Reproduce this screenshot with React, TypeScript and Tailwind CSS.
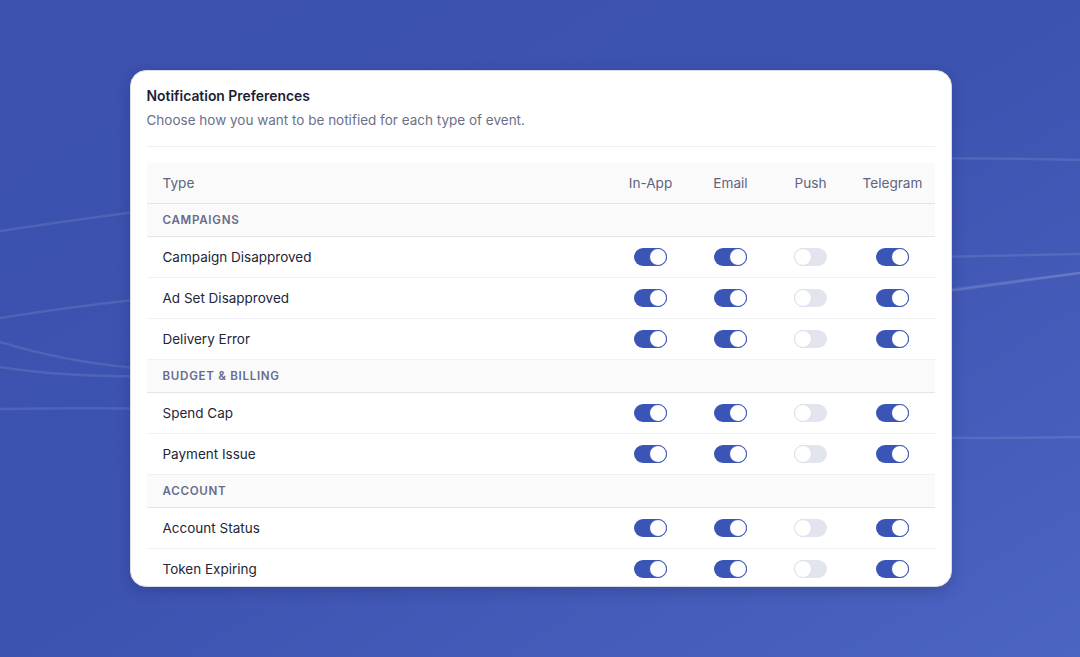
import React from "react";

type Row = { label: string; values: [boolean, boolean, boolean, boolean] };
type Group = { title: string; rows: Row[] };

const groups: Group[] = [
  {
    title: "Campaigns",
    rows: [
      { label: "Campaign Disapproved", values: [true, true, false, true] },
      { label: "Ad Set Disapproved", values: [true, true, false, true] },
      { label: "Delivery Error", values: [true, true, false, true] },
    ],
  },
  {
    title: "Budget & Billing",
    rows: [
      { label: "Spend Cap", values: [true, true, false, true] },
      { label: "Payment Issue", values: [true, true, false, true] },
    ],
  },
  {
    title: "Account",
    rows: [
      { label: "Account Status", values: [true, true, false, true] },
      { label: "Token Expiring", values: [true, true, false, true] },
    ],
  },
];

const channels = ["In-App", "Email", "Push", "Telegram"];

function Toggle({ on }: { on: boolean }) {
  return on ? (
    <div className="flex h-[18px] w-[33px] items-center justify-end rounded-full bg-[#3a55b5]">
      <div className="h-[18px] w-[18px] rounded-full border border-[#3a55b5] bg-white" />
    </div>
  ) : (
    <div className="flex h-[18px] w-[33px] items-center justify-start rounded-full bg-[#e3e5ee]">
      <div className="h-[18px] w-[18px] rounded-full border border-[#dcdfe9] bg-white" />
    </div>
  );
}

function Cells({ children, className }: { children: React.ReactNode; className?: string }) {
  return <div className={"grid grid-cols-[1fr_80px_80px_80px_84px] items-center " + (className ?? "")}>{children}</div>;
}

function Backdrop() {
  return (
    <svg className="absolute inset-0 h-full w-full" viewBox="0 0 1080 657" preserveAspectRatio="none">
      <g fill="none" stroke="#ffffff" strokeOpacity="0.1" strokeWidth="2.5">
        <path d="M0 231 C 300 185, 700 150, 1080 160" />
        <path d="M0 318 C 300 270, 700 262, 1080 254" />
        <path d="M0 342 C 250 420, 600 330, 1080 273" />
        <path d="M0 367 C 200 400, 600 340, 1080 273" />
        <path d="M0 409 C 400 402, 700 445, 1080 437" />
      </g>
    </svg>
  );
}

export default function App() {
  return (
    <div
      className="relative flex h-[657px] w-full items-center justify-center overflow-hidden bg-gradient-to-br from-[#3b51ad] via-[#3d53b0] to-[#4c64c2]"
      style={{ fontFamily: "Inter, 'Noto Sans', sans-serif" }}
    >
      <Backdrop />
      <div className="relative ml-px h-[517px] w-[822px] overflow-hidden rounded-2xl border border-[#d9dbe3] bg-white px-4 pt-[15px] shadow-[0_4px_14px_rgba(20,30,80,0.25)]">
        <div className="text-[13.9px] font-semibold leading-5 text-[#1b1f36]">Notification Preferences</div>
        <div className="mt-1 text-[13.5px] leading-5 text-[#6b7089]">Choose how you want to be notified for each type of event.</div>
        <div className="mt-4 h-px bg-[#eeeff3]" />
        <div className="mt-4">
          <Cells className="h-[41px] border-b border-[#e3e4ec] bg-[#fafafb] pt-px text-[13.6px] text-[#5e6380]">
            <div className="pl-4">Type</div>
            {channels.map((c) => (
              <div key={c} className="text-center">
                {c}
              </div>
            ))}
          </Cells>
          {groups.map((g) => (
            <div key={g.title}>
              <div className="flex h-[33px] items-center border-b border-[#e3e4ec] bg-[#fafafb] pl-4 pt-[2px] text-[11.6px] font-semibold uppercase tracking-[0.06em] text-[#676c8c]">
                {g.title}
              </div>
              {g.rows.map((r) => (
                <Cells key={r.label} className="h-[41px] border-b border-[#f0f1f5] pt-px text-[13.5px] text-[#23263a]">
                  <div className="pl-4">{r.label}</div>
                  {r.values.map((v, j) => (
                    <div key={j} className="-mt-px flex justify-center">
                      <Toggle on={v} />
                    </div>
                  ))}
                </Cells>
              ))}
            </div>
          ))}
        </div>
      </div>
    </div>
  );
}
